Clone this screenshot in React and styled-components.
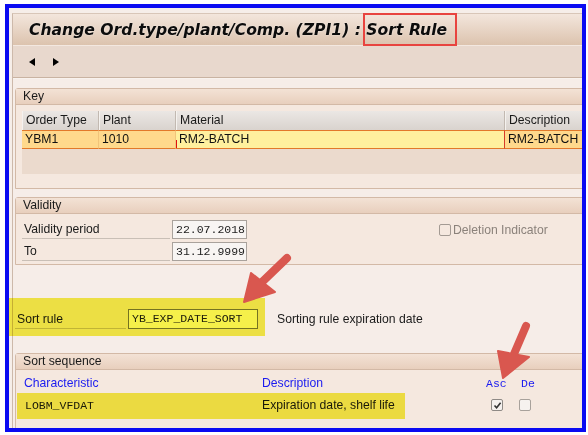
import React from "react";
import styled, { createGlobalStyle } from "styled-components";

const Global = createGlobalStyle`
  html, body { margin: 0; padding: 0; background: #ffffff; }
  body { font-family: "Liberation Sans", Arial, sans-serif; }
`;

const Page = styled.div`
  width: 588px;
  height: 435px;
  box-sizing: border-box;
  padding: 4px 2px 3px 5px;
  background: #ffffff;
`;

const Frame = styled.div`
  position: relative;
  height: 100%;
  box-sizing: border-box;
  border: 4px solid #0a0af2;
  background: #f6eee9;
  overflow: hidden;
  padding: 5px 0 0 3px;
`;

const Window = styled.div`
  border-left: 1px solid #cdb9aa;
  border-top: 1px solid #d8c6b8;
  display: flex;
  flex-direction: column;
  margin-right: -10px;
  & > * { flex-shrink: 0; }
`;

const TitleBar = styled.div`
  height: 31px;
  display: flex;
  align-items: center;
  padding-left: 16px;
  background: linear-gradient(#f3e6dc, #dcc3ae);
  border-bottom: 1px solid #f3e8e0;
`;

const Title = styled.h1`
  margin: 0;
  font-family: "DejaVu Sans", Verdana, sans-serif;
  font-weight: bold;
  font-style: italic;
  font-size: 15.6px;
  color: #0c0c0c;
  text-shadow: 0 0 2px rgba(255, 255, 255, 0.6);
  white-space: nowrap;
`;

const Toolbar = styled.div`
  height: 31px;
  display: flex;
  align-items: center;
  gap: 18px;
  padding-left: 16px;
  background: #e8d8cd;
  border-bottom: 1px solid #c9b3a2;
`;

const NavArrow = styled.span`
  width: 0;
  height: 0;
  border-top: 4.5px solid transparent;
  border-bottom: 4.5px solid transparent;
  ${(p) => (p.dir === "left" ? "border-right: 6px solid #000;" : "border-left: 6px solid #000;")}
`;

const Body = styled.div`
  background: #f6ede8;
  padding: 9px 0 0 2px;
  display: flex;
  flex-direction: column;
  border-top: 1px solid #f8f2ee;
  & > * { flex-shrink: 0; }
`;

const Group = styled.section`
  border: 1px solid #d3b9a6;
  border-radius: 3px 3px 0 0;
  background: #f5e8df;
  margin-bottom: ${(p) => p.mb || 0}px;
`;

const GroupHeader = styled.div`
  height: 15px;
  line-height: 15px;
  padding-left: 7px;
  font-size: 12.2px;
  color: #1a1a1a;
  background: linear-gradient(#f3e2d5, #e8cfbd);
  border-bottom: 1px solid #d3b9a6;
`;

const GroupContent = styled.div`
  padding: ${(p) => p.pad};
`;

const Table = styled.div`
  display: grid;
  grid-template-columns: 77px 77px 329px 120px;
  background: #ebdacd;
  min-height: 63px;
  align-content: start;
`;

const HeadCell = styled.div`
  height: 19px;
  line-height: 19px;
  padding-left: 3px;
  font-size: 12.2px;
  color: #1a1a1a;
  background: linear-gradient(#ebe7e4, #d9d3ce);
  border-right: 1px solid #c2b9b1;
  border-left: 1px solid #f5f2ef;
  box-sizing: border-box;
`;

const Cell = styled.div`
  position: relative;
  height: 19px;
  line-height: 17px;
  padding-left: 3px;
  font-size: 12.2px;
  color: #111;
  background: ${(p) => (p.focus ? "#fff09e" : "#ffd98c")};
  border-top: 1px solid #e2792a;
  border-bottom: 1px solid #e2792a;
  border-right: 1px solid ${(p) => (p.focus ? "#d63a2a" : "#f1c47a")};
  box-sizing: border-box;
  ${(p) =>
    p.focus &&
    `&::before{content:"";position:absolute;left:0;bottom:0;width:1px;height:8px;background:#e01010;}`}
`;

const FieldRow = styled.div`
  display: flex;
  align-items: center;
  height: 19px;
  margin-top: ${(p) => p.mt || 0}px;
`;

const Label = styled.div`
  width: ${(p) => p.w}px;
  height: 19px;
  line-height: 19px;
  font-size: 12.2px;
  color: #1a1a1a;
  padding-left: ${(p) => p.pl || 2}px;
  box-sizing: border-box;
  border-bottom: 1px solid #c9bfb6;
  margin-right: 2px;
`;

const Input = styled.div`
  width: ${(p) => p.w}px;
  height: ${(p) => p.h || 19}px;
  line-height: ${(p) => (p.h || 19) - 2}px;
  box-sizing: border-box;
  border: 1px solid ${(p) => p.bc || "#a9a29c"};
  background: ${(p) => p.bg || "#f8f5f3"};
  font-family: "Liberation Mono", "Courier New", monospace;
  font-size: 11.5px;
  color: #222;
  padding-left: 3px;
`;

const CheckWrap = styled.label`
  display: flex;
  align-items: center;
  margin-left: ${(p) => p.ml || 0}px;
  font-size: 12.2px;
  color: #8b827b;
  gap: 2px;
`;

const Box = styled.span`
  width: 12px;
  height: 12px;
  box-sizing: border-box;
  border: 1px solid ${(p) => p.bc || "#a39a93"};
  border-radius: 2px;
  background: ${(p) => p.bg || "transparent"};
  display: flex;
  align-items: center;
  justify-content: center;
`;

const SortRuleRow = styled.div`
  display: flex;
  align-items: center;
  height: 20px;
  margin: 44px 0 24px 0;
`;

const PlainText = styled.div`
  font-size: 12.2px;
  color: #1a1a1a;
  margin-left: ${(p) => p.ml || 0}px;
`;

const ColHeads = styled.div`
  display: flex;
  align-items: center;
  height: 16px;
  margin-top: 5px;
`;

const ColHead = styled.div`
  width: ${(p) => p.w}px;
  font-family: ${(p) => (p.mono ? '"Liberation Mono", "Courier New", monospace' : '"Liberation Sans", Arial, sans-serif')};
  font-size: ${(p) => (p.mono ? 11.5 : 12.2)}px;
  color: #1b1bf0;
  padding-left: ${(p) => p.pl || 0}px;
  box-sizing: border-box;
`;

const SeqRow = styled.div`
  display: flex;
  align-items: center;
  height: 26px;
  margin-top: 1px;
`;

const SeqCell = styled.div`
  width: ${(p) => p.w}px;
  font-family: ${(p) => (p.mono ? '"Liberation Mono", "Courier New", monospace' : '"Liberation Sans", Arial, sans-serif')};
  font-size: ${(p) => (p.mono ? 11.5 : 12.2)}px;
  color: #1a1a1a;
  padding-left: ${(p) => p.pl || 0}px;
  box-sizing: border-box;
  display: flex;
  align-items: center;
`;

const Highlight = styled.div`
  position: absolute;
  left: ${(p) => p.x - 9}px;
  top: ${(p) => p.y - 8}px;
  width: ${(p) => p.w}px;
  height: ${(p) => p.h}px;
  background: #f5f04a;
  mix-blend-mode: multiply;
  pointer-events: none;
`;

const RedBox = styled.div`
  position: absolute;
  left: ${363 - 9}px;
  top: ${13 - 8}px;
  width: 94px;
  height: 33px;
  box-sizing: border-box;
  border: 2px solid #e8443f;
  pointer-events: none;
`;

const Overlay = styled.svg`
  position: absolute;
  left: -9px;
  top: -8px;
  width: 588px;
  height: 435px;
  pointer-events: none;
`;

const Check = () => (
  <svg width="9" height="9" viewBox="0 0 9 9">
    <path d="M1.5 4.5 L3.6 6.8 L7.6 1.8" fill="none" stroke="#333" strokeWidth="1.6" />
  </svg>
);

export default function App() {
  return (
    <>
      <Global />
      <Page>
        <Frame>
          <Window>
            <TitleBar>
              <Title>Change Ord.type/plant/Comp. (ZPI1) : Sort Rule</Title>
            </TitleBar>
            <Toolbar>
              <NavArrow dir="left" />
              <NavArrow dir="right" />
            </Toolbar>
            <Body>
              <Group mb={8}>
                <GroupHeader>Key</GroupHeader>
                <GroupContent pad="6px 0 14px 6px">
                  <Table>
                    <HeadCell>Order Type</HeadCell>
                    <HeadCell>Plant</HeadCell>
                    <HeadCell>Material</HeadCell>
                    <HeadCell>Description</HeadCell>
                    <Cell>YBM1</Cell>
                    <Cell>1010</Cell>
                    <Cell focus>RM2-BATCH</Cell>
                    <Cell>RM2-BATCH</Cell>
                  </Table>
                </GroupContent>
              </Group>

              <Group>
                <GroupHeader>Validity</GroupHeader>
                <GroupContent pad="6px 0 3px 6px">
                  <FieldRow>
                    <Label w={148}>Validity period</Label>
                    <Input w={75}>22.07.2018</Input>
                    <CheckWrap ml={192}>
                      <Box />
                      Deletion Indicator
                    </CheckWrap>
                  </FieldRow>
                  <FieldRow mt={3}>
                    <Label w={148}>To</Label>
                    <Input w={75}>31.12.9999</Input>
                  </FieldRow>
                </GroupContent>
              </Group>

              <SortRuleRow>
                <Label w={111} pl={2}>Sort rule</Label>
                <Input w={130} h={20} bc="#7a7a6e" bg="#ffffff">YB_EXP_DATE_SORT</Input>
                <PlainText ml={19}>Sorting rule expiration date</PlainText>
              </SortRuleRow>

              <Group>
                <GroupHeader>Sort sequence</GroupHeader>
                <GroupContent pad="0 0 20px 8px">
                  <ColHeads>
                    <ColHead w={238}>Characteristic</ColHead>
                    <ColHead w={224}>Description</ColHead>
                    <ColHead w={35} mono>Asc</ColHead>
                    <ColHead w={30} mono>De</ColHead>
                  </ColHeads>
                  <SeqRow>
                    <SeqCell w={238} mono pl={1}>LOBM_VFDAT</SeqCell>
                    <SeqCell w={229}>Expiration date, shelf life</SeqCell>
                    <SeqCell w={28}>
                      <Box bc="#8f8a86" bg="#f4f0ee"><Check /></Box>
                    </SeqCell>
                    <SeqCell w={28}>
                      <Box bc="#a8a19b" bg="#f6f2ef" />
                    </SeqCell>
                  </SeqRow>
                </GroupContent>
              </Group>
            </Body>
          </Window>

          <Highlight x={9} y={298} w={256} h={38} />
          <Highlight x={17} y={393} w={388} h={26} />
          <RedBox />
          <Overlay viewBox="0 0 588 435">
            <g fill="#d9574f" stroke="#d9574f" strokeLinejoin="round">
              <line x1="287" y1="258" x2="260" y2="284" strokeWidth="8" strokeLinecap="round" />
              <polygon points="244,302 251,273 275,292" strokeWidth="2" />
              <line x1="526" y1="326" x2="514" y2="354" strokeWidth="8" strokeLinecap="round" />
              <polygon points="503,378 498,351 529,357" strokeWidth="2" />
            </g>
          </Overlay>
        </Frame>
      </Page>
    </>
  );
}
